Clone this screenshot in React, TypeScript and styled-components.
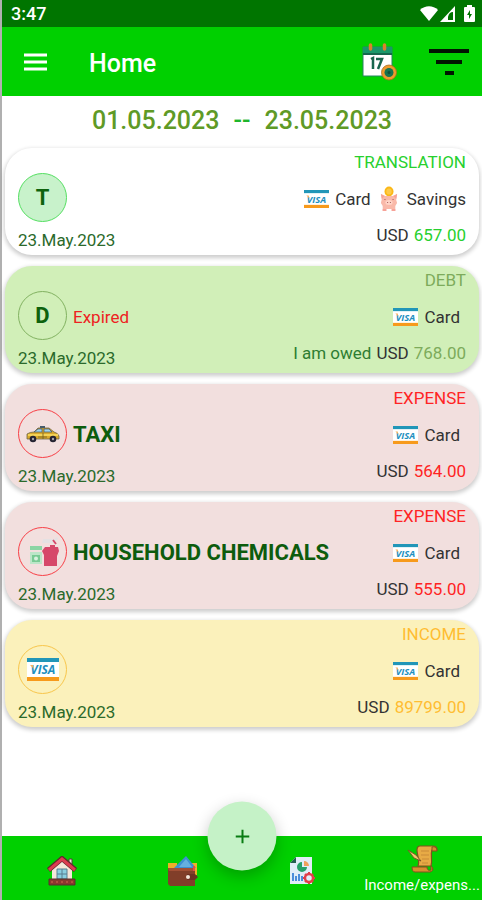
import React from "react";
import styled, { createGlobalStyle } from "styled-components";

const GlobalStyle = createGlobalStyle`
  * { box-sizing: border-box; }
  body { margin: 0; background: #ffffff; font-family: Roboto, "Liberation Sans", sans-serif; }
  button { font: inherit; border: 0; padding: 0; background: none; cursor: pointer; }
`;

const Screen = styled.div`
  min-height: 100vh;
  display: flex;
  flex-direction: column;
  border-left: 2px solid #b0b0b0;
`;

const StatusBar = styled.div`
  height: 27px;
  display: flex;
  align-items: center;
  justify-content: space-between;
  padding: 0 7px 0 9px;
  background: #007500;
  color: #ffffff;
  font-size: 18px;
  font-weight: 500;
`;

const StatusIcons = styled.div`
  display: flex;
  align-items: center;
  gap: 1px;
`;

const AppBar = styled.header`
  height: 69px;
  display: flex;
  align-items: center;
  padding: 0 12px 0 20px;
  background: #00d000;
`;

const IconButton = styled.button`
  display: flex;
  align-items: center;
  justify-content: center;
`;

const Title = styled.h1`
  flex: 1;
  margin: 4px 0 0 40px;
  color: #ffffff;
  font-size: 25px;
  font-weight: 500;
`;

const BarActions = styled.div`
  display: flex;
  align-items: center;
  gap: 30px;
`;

const DateRange = styled.div`
  height: 52px;
  padding-bottom: 4px;
  display: flex;
  align-items: center;
  justify-content: center;
  gap: 14px;
  color: #5f9a26;
  font-size: 25px;
  font-weight: 500;
`;

const Dash = styled.span`
  color: #1fb52c;
`;

const List = styled.ul`
  flex: 1;
  list-style: none;
  margin: 0;
  padding: 0 3px 24px;
  display: flex;
  flex-direction: column;
  gap: 11px;
`;

const Card = styled.li<{ $bg: string }>`
  display: flex;
  justify-content: space-between;
  height: 107px;
  padding: 2px 13px 3px;
  border-radius: 27px;
  background: ${(p) => p.$bg};
  box-shadow: 0 2px 4px 1px rgba(0, 0, 0, 0.2);
`;

const CardLeft = styled.div`
  display: flex;
  flex-direction: column;
  justify-content: flex-end;
  gap: 6px;
`;

const Category = styled.div`
  display: flex;
  align-items: center;
  gap: 6px;
`;

const Avatar = styled.span<{ $line: string; $fill?: string }>`
  width: 49px;
  height: 49px;
  display: flex;
  align-items: center;
  justify-content: center;
  border: 1px solid ${(p) => p.$line};
  border-radius: 50%;
  background: ${(p) => p.$fill ?? "transparent"};
  color: #0d620d;
  font-size: 22px;
  font-weight: 700;
`;

const Name = styled.span`
  padding-top: 2px;
  color: #0d5c0d;
  font-size: 22px;
  font-weight: 700;
`;

const Expired = styled.span`
  padding-top: 2px;
  color: #ee2222;
  font-size: 17px;
`;

const DateText = styled.time`
  color: #2b6a2b;
  font-size: 17px;
  line-height: 24px;
`;

const CardRight = styled.div`
  display: flex;
  flex-direction: column;
  align-items: flex-end;
  color: #333333;
  font-size: 17px;
  line-height: 24px;
`;

const Kind = styled.span<{ $color: string }>`
  color: ${(p) => p.$color};
`;

const Accounts = styled.div<{ $inset: boolean }>`
  height: 49px;
  display: flex;
  align-items: center;
  gap: 9px;
  padding-right: ${(p) => (p.$inset ? "6px" : "0")};
`;

const AccountTag = styled.span`
  display: flex;
  align-items: center;
  gap: 6px;
`;

const SavingsTag = styled(AccountTag)`
  gap: 9px;
`;

const Amount = styled.div`
  display: flex;
  gap: 5px;
`;

const Owed = styled.span`
  color: #2e7d32;
`;

const NavBar = styled.nav`
  position: relative;
  height: 64px;
  display: grid;
  grid-template-columns: repeat(4, minmax(0, 1fr));
  background: #00d000;
`;

const NavItem = styled.button`
  min-width: 0;
  display: flex;
  flex-direction: column;
  align-items: center;
  justify-content: center;
  padding-top: 5px;
  color: #ffffff;
`;

const NavLabel = styled.span`
  white-space: nowrap;
  font-size: 15px;
  line-height: 24px;
`;

const AddButton = styled.button`
  position: absolute;
  left: 50%;
  top: 0;
  width: 69px;
  height: 69px;
  display: flex;
  align-items: center;
  justify-content: center;
  transform: translate(-50%, -50%);
  border-radius: 50%;
  background: #c5f2c7;
  box-shadow: 0 6px 16px rgba(0, 0, 0, 0.24);
`;

const VisaWord = styled.text`
  font-family: "Open Sans", sans-serif;
  font-size: 12px;
  font-style: italic;
  font-weight: 700;
`;

const Visa = ({ large = false }: { large?: boolean }) => (
  <svg width={large ? 32 : 25} height={large ? 23 : 18} viewBox="0 0 32 23" role="img" aria-label="Visa">
    <path fill="#ffffff" d="M0 0h32v23H0z" />
    <path fill="#2196b8" d="M0 0h32v4H0z" />
    <path fill="#f79a1c" d="M0 19h32v4H0z" />
    <VisaWord x="16" y="16" textAnchor="middle" fill="#1d8fc0">VISA</VisaWord>
    <path fill="#f7b05c" d="M3 7h3l1 4z" />
  </svg>
);

const Piggy = () => (
  <svg width="18" height="26" viewBox="0 0 20 26" preserveAspectRatio="none" aria-hidden="true">
    <circle cx="10" cy="5.500" r="5" fill="#fbb817" />
    <circle cx="10" cy="5.500" r="3" fill="#fdca48" />
    <path fill="#f9b9a9" d="M1 8l5 2h8l5-2-1 6 1 3-2 3v5h-4v-2H7v2H3v-5l-2-3 1-4z" />
    <path fill="#f7a298" d="M1 8l4 2-3 3zM19 8l-4 2 3 3zM3 23h4v2H3zM13 23h4v2h-4z" />
    <ellipse cx="10" cy="16.500" rx="4" ry="2.500" fill="#ffd4c6" />
    <path fill="#9d4e50" d="M5 13h1v1H5zM14 13h1v1h-1zM8 16h1v1H8zM11 16h1v1h-1z" />
  </svg>
);

const Taxi = () => (
  <svg width="34" height="18" viewBox="0 0 34 18" aria-hidden="true">
    <path fill="#d9a92c" stroke="#6d6547" strokeWidth=".8" d="M1 14V9q3-2 7-2l4-4h11l5 4q4 1 5 4v3z" />
    <path fill="#9ed4ef" stroke="#445566" strokeWidth=".7" d="M8 7l4-3h4v3zM18 4h5l3 3h-8z" />
    <path fill="#f4d357" d="M2 9h30v2H2z" />
    <path fill="#465b6b" d="M14 1h5v2h-5z" />
    <path stroke="#705c22" strokeWidth=".8" d="M17 7v7M12 12h9" />
    <circle cx="7" cy="14" r="3.300" fill="#242331" />
    <circle cx="27" cy="14" r="3.300" fill="#242331" />
    <circle cx="7" cy="14" r="1.200" fill="#a3a2aa" />
    <circle cx="27" cy="14" r="1.200" fill="#a3a2aa" />
  </svg>
);

const Chemicals = () => (
  <svg width="32" height="30" viewBox="0 0 32 30" aria-hidden="true">
    <path fill="#8bd5a4" d="M3 9h12v4H3z" />
    <path fill="#bce6c8" d="M3 15h12v12H3z" />
    <path fill="#79ca94" d="M5 18h8v7H5z" />
    <circle cx="9" cy="21.500" r="2" fill="#d8f1df" />
    <path fill="#e5e1e3" d="M16 2h11l3-2 1 2-5 4H15z" />
    <path fill="#d6486a" d="M18 10h5V8h5v2h3l1 4-2 5v10H17V18l-2-4z" />
    <path fill="none" stroke="#d6486a" strokeWidth="1.800" d="M26 3l3 4" />
  </svg>
);

const CalendarIcon = () => (
  <svg width="36" height="38" viewBox="0 0 36 38" aria-hidden="true">
    <path fill="#ffffff" stroke="#268461" strokeWidth="1" d="M1 4h29v29H1z" />
    <path fill="#189869" d="M1 4h29v7H1z" />
    <path fill="#14684d" d="M1 10h29v2H1z" />
    <path stroke="#db812c" strokeWidth="3.500" strokeLinecap="round" d="M8.500 2v4M22.500 2v4" />
    <path fill="none" stroke="#17664d" strokeWidth="2.500" d="M9 16l2-1v11M14 16h6l-4 10" />
    <circle cx="27" cy="29.500" r="7.500" fill="#ee9a2c" stroke="#a76c22" strokeWidth=".8" />
    <circle cx="27" cy="29.500" r="4.500" fill="#16734f" />
    <circle cx="27" cy="29.500" r="1.500" fill="#104d3a" />
  </svg>
);

const House = () => (
  <svg width="30" height="30" viewBox="0 0 30 30" aria-hidden="true">
    <path fill="#f4e7d9" d="M5 13l10-9 10 9v12H5z" />
    <path fill="#efe9e3" stroke="#5b383a" d="M22 3h3v8l-3-3z" />
    <path fill="none" stroke="#61272e" strokeWidth="5" d="M1.500 14L15 2.500 28.500 14" />
    <path fill="none" stroke="#dc3d50" strokeWidth="3" d="M2 14L15 3l13 11" />
    <path fill="#89cfdf" stroke="#587e90" d="M10 13h10v10H10zM15 13v10M10 18h10" />
    <path fill="#8b392e" stroke="#53332a" d="M2 23h26v6H2z" />
    <path stroke="#b0503f" strokeWidth="2" strokeDasharray="2 3" d="M4 26h23" />
  </svg>
);

const Wallet = () => (
  <svg width="31" height="30" viewBox="0 0 31 30" aria-hidden="true">
    <path fill="#efae28" d="M1 7h9v7H1zM20 7h10v12H20z" />
    <path fill="#3b91d0" d="M7 12l12-12 10 12z" />
    <path fill="#65b0df" d="M12 11l7-8 6 8z" />
    <path fill="#813e29" d="M1 12h27v18H3l-2-2z" />
    <path fill="#a24f34" d="M1 12h27v3H2z" />
    <path fill="#6c3023" d="M20 18h8l3 3-3 3h-8z" />
    <circle cx="21" cy="21" r="2" fill="#f4e6da" />
    <path fill="#dd4d49" d="M26 10h2v5h-2z" />
  </svg>
);

const Report = () => (
  <svg width="25" height="28" viewBox="0 0 25 28" aria-hidden="true">
    <path fill="#e1edf8" d="M6 0h16v27H0V6z" />
    <path fill="#255f51" d="M6 0v6H0z" />
    <path fill="#f0a15d" d="M14 4a5 5 0 0 1 5 5h-5z" />
    <path fill="#26a269" d="M12 5v5h5a5 5 0 1 1-5-5z" />
    <path fill="#4c8dda" d="M2 16h2v8H2zM5 19h2v5H5zM8 17h2v7H8zM11 19h2v5h-2z" />
    <circle cx="19" cy="21" r="4" fill="none" stroke="#e23e49" strokeWidth="2.500" />
    <path stroke="#e23e49" strokeWidth="2" d="M19 15v2M19 25v2M13 21h2M23 21h2M15 17l1 1M22 24l1 1M15 25l1-1M22 18l1-1" />
  </svg>
);

const Scroll = () => (
  <svg width="31" height="28" viewBox="0 0 31 28" aria-hidden="true">
    <path fill="#e7aa45" stroke="#81511f" strokeWidth="1.200" d="M13 1h13c3 0 4 2 4 4h-5c-2 5 1 10-1 16H11c2-6-1-11-1-16 0-2 1-4 3-4z" />
    <path fill="#d68e2f" stroke="#81511f" d="M25 5V2c3-1 5 1 5 4h-5zM5 22h15c0 3 2 4 4 3v-4c2 1 3 5-1 6H8c-2 0-3-2-3-5z" />
    <path fill="#f4c96b" stroke="#7c5729" d="M1 5l8 5 5 6-7-3z" />
    <path fill="none" stroke="#c98a38" d="M14 6h8M14 10h8M15 14h7M15 18h6" />
  </svg>
);

type Account = "Card" | "Savings";

interface Entry {
  kind: string;
  accent: string;
  bg: string;
  line: string;
  fill?: string;
  avatar: React.ReactNode;
  name?: string;
  expired?: boolean;
  owed?: boolean;
  accounts: Account[];
  amount: string;
}

const entries: Entry[] = [
  { kind: "TRANSLATION", accent: "#27d02e", bg: "#ffffff", line: "#55df62", fill: "#c8f2cb", avatar: "T", accounts: ["Card", "Savings"], amount: "657.00" },
  { kind: "DEBT", accent: "#7dab5b", bg: "#d1efb8", line: "#82b261", avatar: "D", expired: true, owed: true, accounts: ["Card"], amount: "768.00" },
  { kind: "EXPENSE", accent: "#ff2424", bg: "#f2dfde", line: "#f83f46", avatar: <Taxi />, name: "TAXI", accounts: ["Card"], amount: "564.00" },
  { kind: "EXPENSE", accent: "#ff2424", bg: "#f2dfde", line: "#f83f46", avatar: <Chemicals />, name: "HOUSEHOLD CHEMICALS", accounts: ["Card"], amount: "555.00" },
  { kind: "INCOME", accent: "#ffbd32", bg: "#fbf1bb", line: "#f8c64c", avatar: <Visa large />, accounts: ["Card"], amount: "89799.00" },
];

const EntryCard = ({ entry }: { entry: Entry }) => (
  <Card $bg={entry.bg}>
    <CardLeft>
      <Category>
        <Avatar $line={entry.line} $fill={entry.fill}>{entry.avatar}</Avatar>
        {entry.name && <Name>{entry.name}</Name>}
        {entry.expired && <Expired>Expired</Expired>}
      </Category>
      <DateText dateTime="2023-05-23">23.May.2023</DateText>
    </CardLeft>
    <CardRight>
      <Kind $color={entry.accent}>{entry.kind}</Kind>
      <Accounts $inset={entry.accounts.length === 1}>
        {entry.accounts.map((account) =>
          account === "Card" ? (
            <AccountTag key={account}><Visa />Card</AccountTag>
          ) : (
            <SavingsTag key={account}><Piggy />Savings</SavingsTag>
          )
        )}
      </Accounts>
      <Amount>
        {entry.owed && <Owed>I am owed</Owed>}
        <span>USD</span>
        <Kind $color={entry.accent}>{entry.amount}</Kind>
      </Amount>
    </CardRight>
  </Card>
);

export default function App() {
  return (
    <>
      <GlobalStyle />
      <Screen>
        <StatusBar>
          <span>3:47</span>
          <StatusIcons>
            <svg width="18" height="16" viewBox="0 0 18 16" aria-hidden="true">
              <path fill="#fff" d="M0 4C5-1 13-1 18 4L9 15z" />
            </svg>
            <svg width="24" height="16" viewBox="0 0 24 16" aria-hidden="true">
              <path fill="#fff" fillRule="evenodd" d="M1 16L16 0v16zM9 14h5V6q-4 0-5 5z" />
            </svg>
            <svg width="11" height="17" viewBox="0 0 11 17" aria-hidden="true">
              <path fill="#fff" d="M3 0h5v2h2q1 0 1 1v13q0 1-1 1H1q-1 0-1-1V3q0-1 1-1h2z" />
              <path fill="#007500" d="M6 5L3 10h2v4l3-5H6z" />
            </svg>
          </StatusIcons>
        </StatusBar>
        <AppBar>
          <IconButton aria-label="Open menu">
            <svg width="27" height="18" viewBox="0 0 27 18" aria-hidden="true">
              <path stroke="#fff" strokeWidth="3" d="M2 2h23M2 9h23M2 16h23" />
            </svg>
          </IconButton>
          <Title>Home</Title>
          <BarActions>
            <IconButton aria-label="Choose dates"><CalendarIcon /></IconButton>
            <IconButton aria-label="Filter">
              <svg width="42" height="28" viewBox="0 0 42 28" aria-hidden="true">
                <path stroke="#001500" strokeWidth="4" d="M1 3h40M8 14h26M17 25h9" />
              </svg>
            </IconButton>
          </BarActions>
        </AppBar>
        <DateRange>
          <span>01.05.2023</span>
          <Dash>--</Dash>
          <span>23.05.2023</span>
        </DateRange>
        <List>
          {entries.map((entry) => <EntryCard key={entry.amount} entry={entry} />)}
        </List>
        <NavBar>
          <NavItem aria-label="Home"><House /></NavItem>
          <NavItem aria-label="Wallet"><Wallet /></NavItem>
          <NavItem aria-label="Reports"><Report /></NavItem>
          <NavItem>
            <Scroll />
            <NavLabel>Income/expens...</NavLabel>
          </NavItem>
          <AddButton aria-label="Add entry">
            <svg width="14" height="14" viewBox="0 0 14 14" aria-hidden="true">
              <path stroke="#087c12" strokeWidth="2" d="M7 0v14M0 7h14" />
            </svg>
          </AddButton>
        </NavBar>
      </Screen>
    </>
  );
}
